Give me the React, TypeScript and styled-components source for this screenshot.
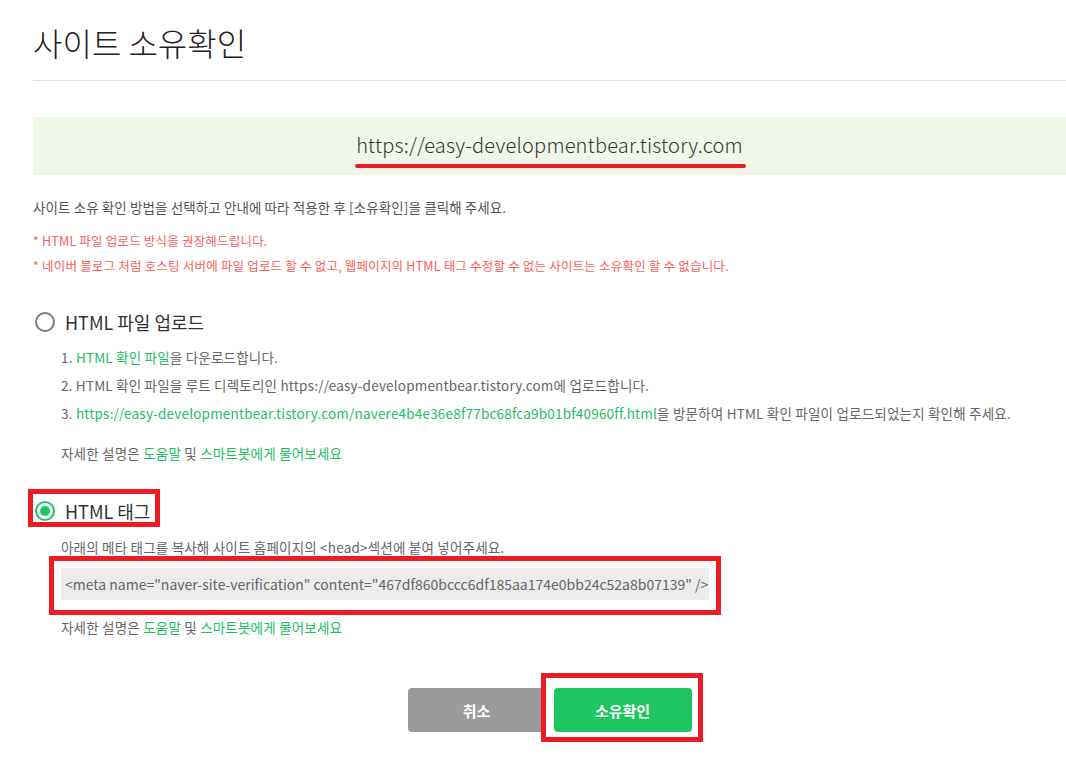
import React from "react";
import styled, { createGlobalStyle } from "styled-components";

const GlobalStyle = createGlobalStyle`
  body {
    margin: 0;
    background: #fff;
    font-family: "Noto Sans CJK KR", "Noto Sans", sans-serif;
    color: #333;
  }
`;

const ANNOTATION = "#ed1c24";
const GREEN = "#1ec662";
const LINK = "#1bbf5f";

// Layout
const Page = styled.div`
  padding: 0 0 40px 33px;
  width: 1033px;
`;

const Header = styled.div`
  padding: 22px 0 18px;
  border-bottom: 1px solid #e1e1e1;
`;

const Title = styled.h1`
  margin: 0;
  font-size: 32px;
  line-height: 40px;
  font-weight: 300;
  color: #222;
`;

const SiteBox = styled.div`
  margin-top: 36px;
  height: 58px;
  background: #f0f6e8;
  display: flex;
  align-items: center;
  justify-content: center;
`;

const SiteUrl = styled.span`
  position: relative;
  font-size: 20px;
  line-height: 28px;
  font-weight: 300;
  letter-spacing: 0.2px;
  color: #333;
  padding-bottom: 2px;

  /* red underline annotation */
  &::after {
    content: "";
    position: absolute;
    left: -1px;
    right: -3px;
    bottom: -7px;
    height: 4px;
    border-radius: 2px;
    background: ${ANNOTATION};
  }
`;

const Intro = styled.p`
  margin: 22px 0 0;
  font-size: 13.5px;
  line-height: 20px;
  letter-spacing: 0.1px;
  color: #555;
`;

const Notes = styled.ul`
  list-style: none;
  margin: 11px 0 0;
  padding: 0;
`;

const Note = styled.li`
  font-size: 12.5px;
  line-height: 25px;
  letter-spacing: 0.2px;
  color: #fd5d5d;
`;

const Option = styled.div<{ $gap: number }>`
  margin-top: ${(p) => p.$gap}px;
`;

const Highlight = styled.div<{ $t: number; $r: number; $b: number; $l: number }>`
  position: relative;
  display: inline-flex;

  &::after {
    content: "";
    position: absolute;
    top: ${(p) => -p.$t}px;
    right: ${(p) => -p.$r}px;
    bottom: ${(p) => -p.$b}px;
    left: ${(p) => -p.$l}px;
    border: 5px solid ${ANNOTATION};
    pointer-events: none;
  }
`;

const RadioRow = styled.label`
  display: inline-flex;
  align-items: center;
  gap: 10px;
  height: 24px;
  margin-left: 2px;
  font-size: 18px;
  color: #333;
  cursor: pointer;
`;

const RadioMark = styled.span<{ $on?: boolean }>`
  box-sizing: border-box;
  width: 20px;
  height: 20px;
  border-radius: 50%;
  border: 2px solid ${(p) => (p.$on ? GREEN : "#7a7a7a")};
  display: flex;
  align-items: center;
  justify-content: center;

  &::before {
    content: "";
    width: 10px;
    height: 10px;
    border-radius: 50%;
    background: ${(p) => (p.$on ? GREEN : "transparent")};
  }
`;

const Body = styled.div`
  padding-left: 28px;
`;

const Steps = styled.ol`
  list-style: none;
  margin: 9px 0 0;
  padding: 0;
`;

const Step = styled.li`
  font-size: 13.5px;
  line-height: 28px;
  letter-spacing: 0.2px;
  color: #666;
`;

const Link = styled.a`
  color: ${LINK};
  text-decoration: none;
`;

const Help = styled.p<{ $gap: number }>`
  margin: ${(p) => p.$gap}px 0 0;
  font-size: 13.5px;
  line-height: 20px;
  letter-spacing: 0.2px;
  color: #666;
`;

const Desc = styled.p`
  margin: 14px 0 0;
  font-size: 13.5px;
  line-height: 20px;
  letter-spacing: 0.2px;
  color: #666;
`;

const CodeWrap = styled.div`
  margin-top: 11px;
`;

const CodeBox = styled.div`
  width: 648px;
  height: 32px;
  box-sizing: border-box;
  padding: 0 4px;
  background: #ececec;
  display: flex;
  align-items: center;
  font-size: 14px;
  color: #666;
  white-space: nowrap;
`;

const Actions = styled.div`
  margin-top: 51px;
  display: flex;
  justify-content: center;
  gap: 8px;
`;

const Button = styled.button<{ $primary?: boolean }>`
  width: 138px;
  height: 44px;
  border: 0;
  border-radius: 4px;
  background: ${(p) => (p.$primary ? GREEN : "#9b9b9b")};
  color: #fff;
  font-family: inherit;
  font-size: 15px;
  font-weight: 700;
  cursor: pointer;
`;

const SITE = "https://easy-developmentbear.tistory.com";
const META =
  '<meta name="naver-site-verification" content="467df860bccc6df185aa174e0bb24c52a8b07139" />';

function HelpLine({ gap }: { gap: number }) {
  return (
    <Help $gap={gap}>
      자세한 설명은 <Link href="#">도움말</Link> 및 <Link href="#">스마트봇에게 물어보세요</Link>
    </Help>
  );
}

export default function App() {
  return (
    <>
      <GlobalStyle />
      <Page>
        <Header>
          <Title>사이트 소유확인</Title>
        </Header>

        <SiteBox>
          <SiteUrl>{SITE}</SiteUrl>
        </SiteBox>

        <Intro>사이트 소유 확인 방법을 선택하고 안내에 따라 적용한 후 [소유확인]을 클릭해 주세요.</Intro>
        <Notes>
          <Note>* HTML 파일 업로드 방식을 권장해드립니다.</Note>
          <Note>
            * 네이버 블로그 처럼 호스팅 서버에 파일 업로드 할 수 없고, 웹페이지의 HTML 태그 수정할 수 없는
            사이트는 소유확인 할 수 없습니다.
          </Note>
        </Notes>

        <Option $gap={30}>
          <RadioRow>
            <RadioMark />
            HTML 파일 업로드
          </RadioRow>
          <Body>
            <Steps>
              <Step>
                1. <Link href="#">HTML 확인 파일</Link>을 다운로드합니다.
              </Step>
              <Step>2. HTML 확인 파일을 루트 디렉토리인 {SITE}에 업로드합니다.</Step>
              <Step>
                3. <Link href="#">{SITE}/navere4b4e36e8f77bc68fca9b01bf40960ff.html</Link>을 방문하여 HTML
                확인 파일이 업로드되었는지 확인해 주세요.
              </Step>
            </Steps>
            <HelpLine gap={16} />
          </Body>
        </Option>

        <Option $gap={34}>
          <Highlight $t={10} $r={10} $b={4} $l={5}>
            <RadioRow>
              <RadioMark $on />
              HTML 태그
            </RadioRow>
          </Highlight>
          <Body>
            <Desc>아래의 메타 태그를 복사해 사이트 홈페이지의 &lt;head&gt;섹션에 붙여 넣어주세요.</Desc>
            <CodeWrap>
              <Highlight $t={12} $r={12} $b={15} $l={12}>
                <CodeBox>{META}</CodeBox>
              </Highlight>
            </CodeWrap>
            <HelpLine gap={17} />
          </Body>
        </Option>

        <Actions>
          <Button>취소</Button>
          <Highlight $t={15} $r={11} $b={10} $l={13}>
            <Button $primary>소유확인</Button>
          </Highlight>
        </Actions>
      </Page>
    </>
  );
}
